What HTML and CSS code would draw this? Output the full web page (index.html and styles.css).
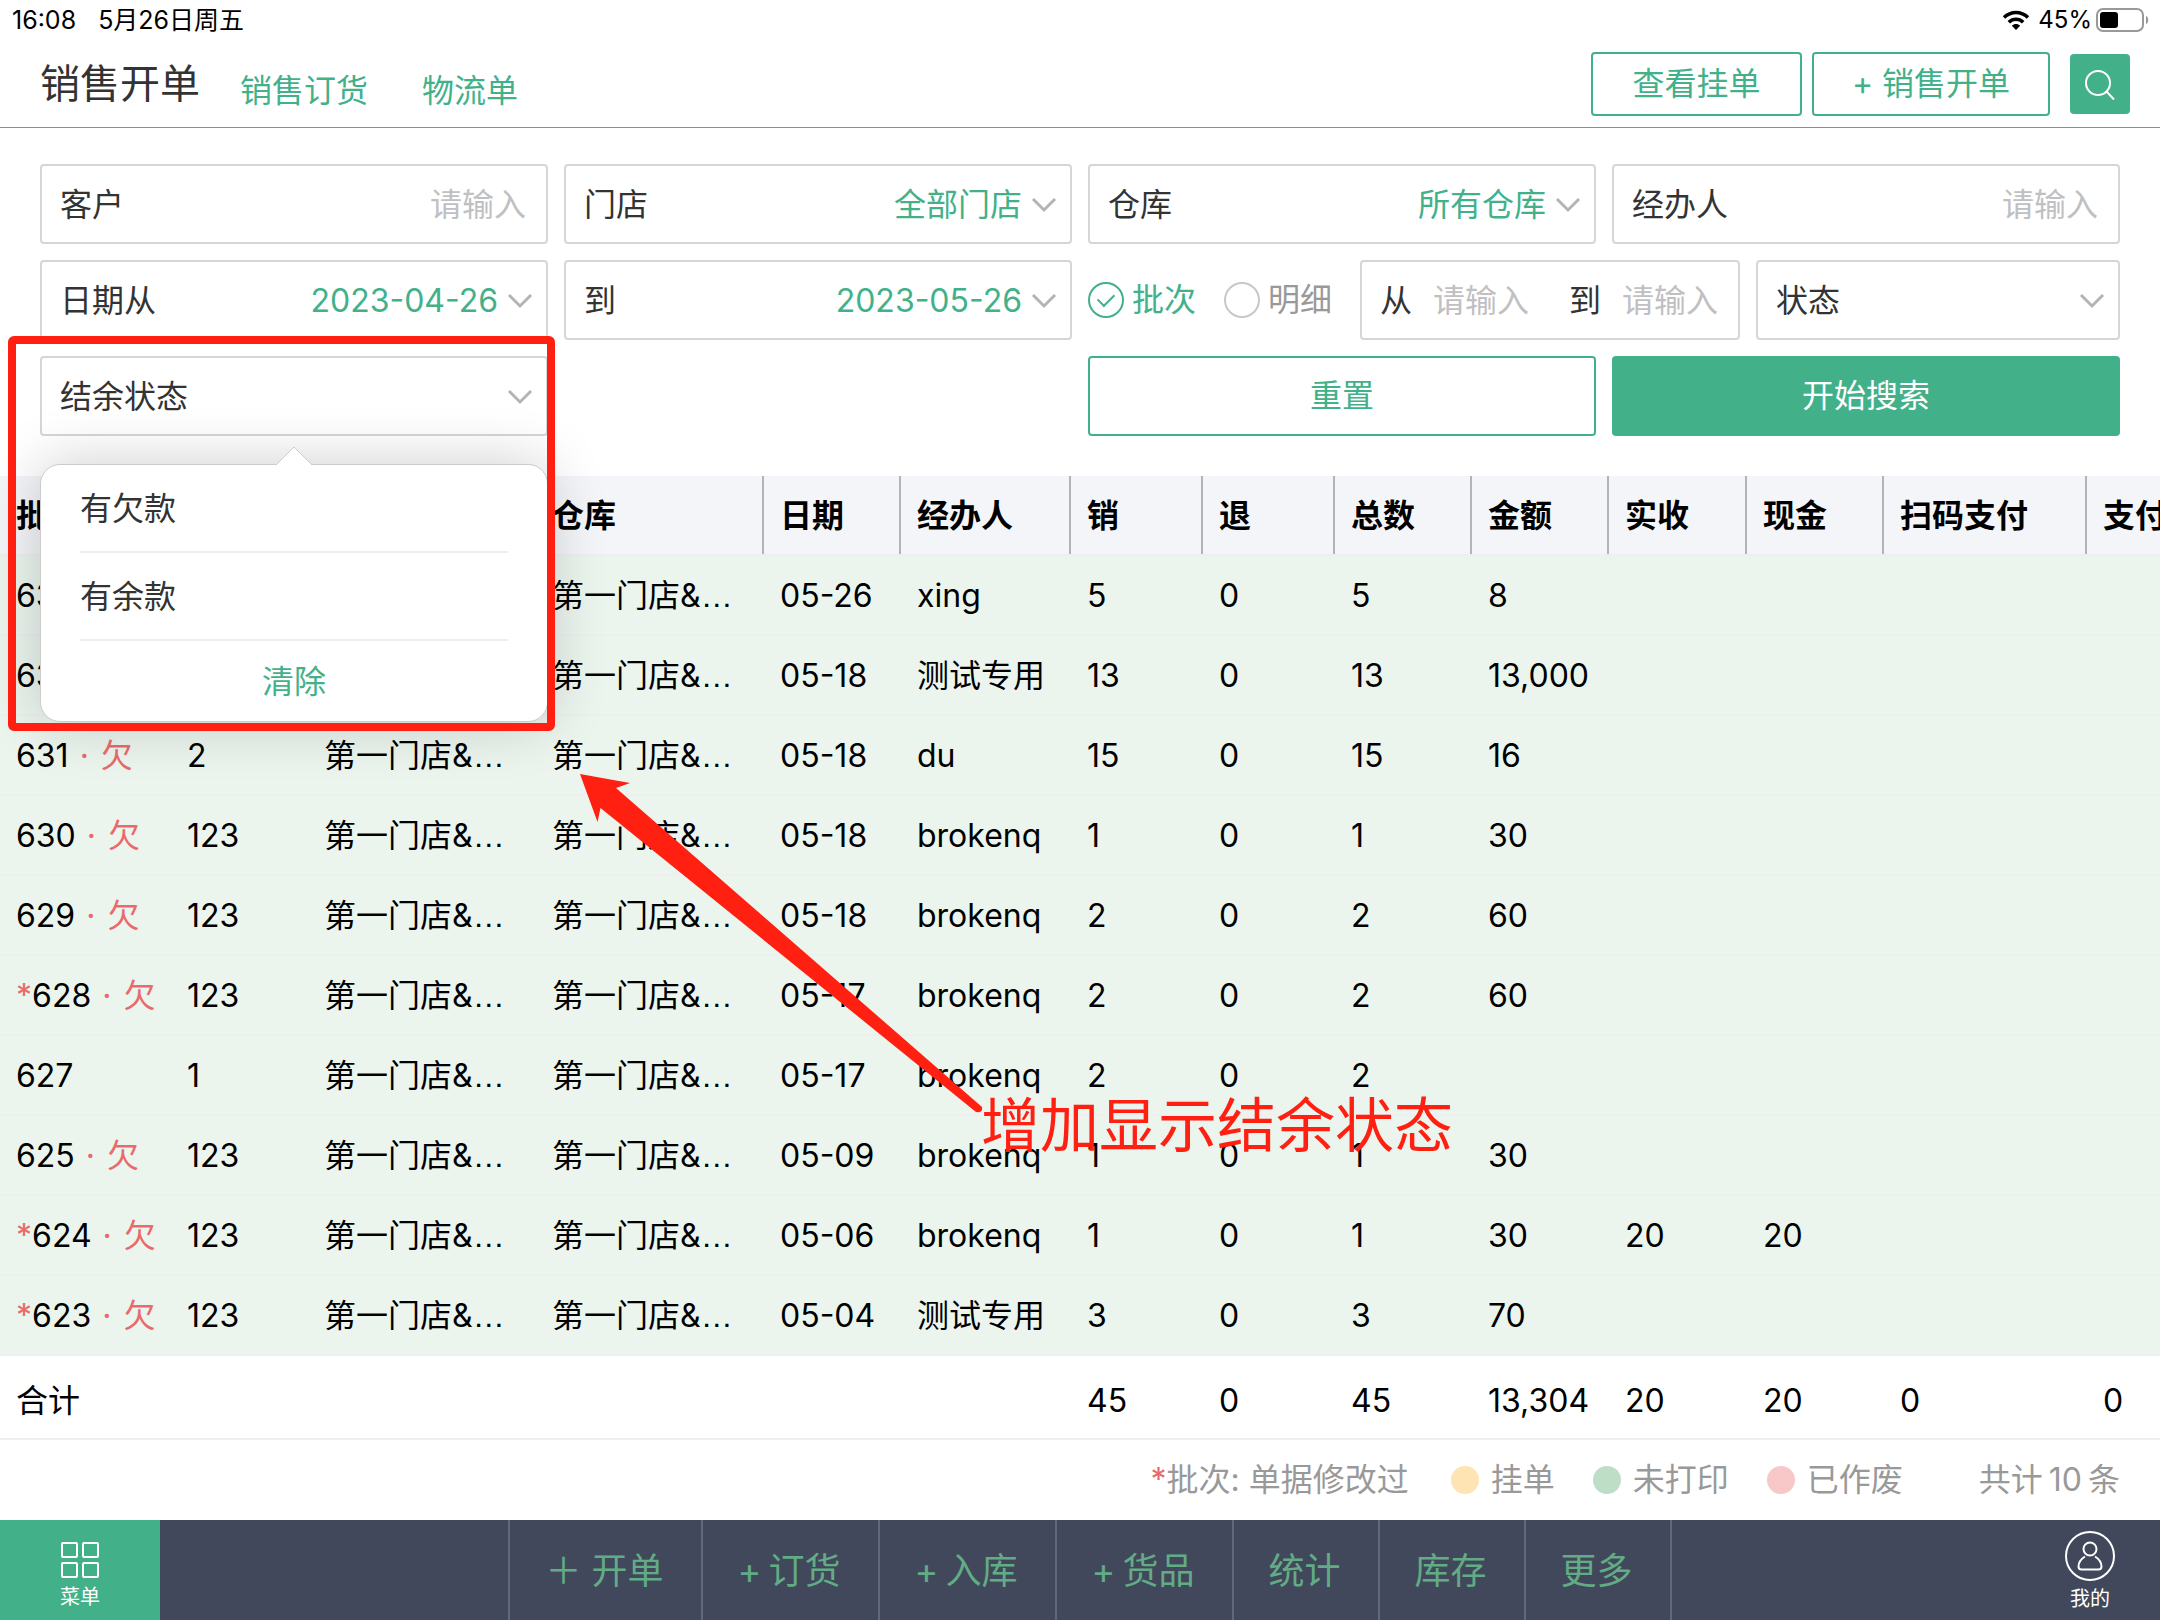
FILE: index.html
```html
<!DOCTYPE html>
<html lang="zh-CN">
<head>
<meta charset="utf-8">
<meta name="viewport" content="width=device-width, initial-scale=1">
<title>销售开单</title>
<link rel="stylesheet" href="styles.css">
</head>
<body>
<div class="page">
  <div class="status-bar">
    <span class="status-time">16:08</span>
    <span class="status-date">5月26日周五</span>
    <svg class="wifi" viewBox="0 0 28 20" aria-hidden="true">
      <path d="M2 7.5C9 .8 19 .8 26 7.5M6.8 12.2c4.200-3.900 10.200-3.900 14.400 0" fill="none" stroke="#000" stroke-width="3.600"/>
      <path d="M14 20l-4.200-4.300c2.400-2.200 6-2.200 8.400 0z" fill="#000"/>
    </svg>
    <span>45%</span>
    <svg class="battery" viewBox="0 0 54 24" aria-hidden="true">
      <rect x="1" y="1" width="46" height="22" rx="6" fill="none" stroke="#999" stroke-width="2"/>
      <rect x="4" y="4" width="18" height="16" rx="3" fill="#000"/>
      <path d="M50 8c3 1 3 7 0 8z" fill="#999"/>
    </svg>
  </div>

  <header class="topbar">
    <h1 class="title">销售开单</h1>
    <nav class="tabs">
      <a href="#order">销售订货</a>
      <a href="#logistics">物流单</a>
    </nav>
    <div class="actions">
      <button class="btn btn-held" type="button">查看挂单</button>
      <button class="btn btn-new" type="button">+ 销售开单</button>
      <button class="btn-search" type="button" aria-label="搜索">
        <svg viewBox="0 0 32 32" fill="none" stroke="#fff" stroke-width="2"><circle cx="14" cy="15" r="12"/><path d="M22.500 23.500L30 31.500"/></svg>
      </button>
    </div>
  </header>

  <form class="filters">
    <div class="field"><label for="customer">客户</label><input id="customer" type="text" placeholder="请输入"></div>
    <div class="field"><label for="shop">门店</label><select id="shop"><option>全部门店</option></select><svg class="chevron" viewBox="0 0 26 16"><path d="M2 2l11 11L24 2"/></svg></div>
    <div class="field"><label for="depot">仓库</label><select id="depot"><option>所有仓库</option></select><svg class="chevron" viewBox="0 0 26 16"><path d="M2 2l11 11L24 2"/></svg></div>
    <div class="field"><label for="agent">经办人</label><input id="agent" type="text" placeholder="请输入"></div>

    <div class="field"><label for="from">日期从</label><input id="from" type="text" value="2023-04-26"><svg class="chevron" viewBox="0 0 26 16"><path d="M2 2l11 11L24 2"/></svg></div>
    <div class="field"><label for="to">到</label><input id="to" type="text" value="2023-05-26"><svg class="chevron" viewBox="0 0 26 16"><path d="M2 2l11 11L24 2"/></svg></div>
    <div class="group">
      <div class="radios">
        <label class="radio"><input type="radio" name="mode" checked><span>批次</span></label>
        <label class="radio"><input type="radio" name="mode"><span>明细</span></label>
      </div>
      <div class="field range">
        <label for="min">从</label><input id="min" type="text" placeholder="请输入">
        <label for="max">到</label><input id="max" type="text" placeholder="请输入">
      </div>
      <div class="field state"><label for="state">状态</label><select id="state"><option></option></select><svg class="chevron" viewBox="0 0 26 16"><path d="M2 2l11 11L24 2"/></svg></div>
    </div>

    <div class="field anchor">
      <label for="balance">结余状态</label><select id="balance"><option></option></select><svg class="chevron" viewBox="0 0 26 16"><path d="M2 2l11 11L24 2"/></svg>
      <div class="popover">
        <svg class="popover-tip" viewBox="0 0 36 20"><path d="M0 19L18 1l18 18" fill="#fff" stroke="#ccc"/><path d="M1 19h34v1H1z" fill="#fff"/></svg>
        <button class="option" type="button">有欠款</button>
        <button class="option" type="button">有余款</button>
        <button class="clear" type="button">清除</button>
      </div>
    </div>
    <button class="btn reset" type="reset">重置</button>
    <button class="btn submit" type="submit">开始搜索</button>
  </form>

  <div class="table-wrap">
    <table class="sales">
      <colgroup>
        <col class="w171"><col class="w137"><col class="w228"><col class="w228"><col class="w137"><col class="w170"><col class="w132"><col class="w132"><col class="w137"><col class="w137"><col class="w138"><col class="w137"><col class="w203"><col class="w203">
      </colgroup>
      <thead>
        <tr><th>批次</th><th>客户</th><th>门店</th><th>仓库</th><th>日期</th><th>经办人</th><th>销</th><th>退</th><th>总数</th><th>金额</th><th>实收</th><th>现金</th><th>扫码支付</th><th>支付</th></tr>
      </thead>
      <tbody>
        <tr><td>633<i class="owe"><span>·</span><span>欠</span></i></td><td>123</td><td>第一门店&amp;<span class="more">…</span></td><td>第一门店&amp;<span class="more">…</span></td><td>05-26</td><td>xing</td><td>5</td><td>0</td><td>5</td><td>8</td><td></td><td></td><td></td><td></td></tr>
        <tr><td>632<i class="owe"><span>·</span><span>欠</span></i></td><td>123</td><td>第一门店&amp;<span class="more">…</span></td><td>第一门店&amp;<span class="more">…</span></td><td>05-18</td><td>测试专用</td><td>13</td><td>0</td><td>13</td><td>13,000</td><td></td><td></td><td></td><td></td></tr>
        <tr><td>631<i class="owe"><span>·</span><span>欠</span></i></td><td>2</td><td>第一门店&amp;<span class="more">…</span></td><td>第一门店&amp;<span class="more">…</span></td><td>05-18</td><td>du</td><td>15</td><td>0</td><td>15</td><td>16</td><td></td><td></td><td></td><td></td></tr>
        <tr><td>630<i class="owe"><span>·</span><span>欠</span></i></td><td>123</td><td>第一门店&amp;<span class="more">…</span></td><td>第一门店&amp;<span class="more">…</span></td><td>05-18</td><td>brokenq</td><td>1</td><td>0</td><td>1</td><td>30</td><td></td><td></td><td></td><td></td></tr>
        <tr><td>629<i class="owe"><span>·</span><span>欠</span></i></td><td>123</td><td>第一门店&amp;<span class="more">…</span></td><td>第一门店&amp;<span class="more">…</span></td><td>05-18</td><td>brokenq</td><td>2</td><td>0</td><td>2</td><td>60</td><td></td><td></td><td></td><td></td></tr>
        <tr><td><i>*</i>628<i class="owe"><span>·</span><span>欠</span></i></td><td>123</td><td>第一门店&amp;<span class="more">…</span></td><td>第一门店&amp;<span class="more">…</span></td><td>05-17</td><td>brokenq</td><td>2</td><td>0</td><td>2</td><td>60</td><td></td><td></td><td></td><td></td></tr>
        <tr><td>627</td><td>1</td><td>第一门店&amp;<span class="more">…</span></td><td>第一门店&amp;<span class="more">…</span></td><td>05-17</td><td>brokenq</td><td>2</td><td>0</td><td>2</td><td></td><td></td><td></td><td></td><td></td></tr>
        <tr><td>625<i class="owe"><span>·</span><span>欠</span></i></td><td>123</td><td>第一门店&amp;<span class="more">…</span></td><td>第一门店&amp;<span class="more">…</span></td><td>05-09</td><td>brokenq</td><td>1</td><td>0</td><td>1</td><td>30</td><td></td><td></td><td></td><td></td></tr>
        <tr><td><i>*</i>624<i class="owe"><span>·</span><span>欠</span></i></td><td>123</td><td>第一门店&amp;<span class="more">…</span></td><td>第一门店&amp;<span class="more">…</span></td><td>05-06</td><td>brokenq</td><td>1</td><td>0</td><td>1</td><td>30</td><td>20</td><td>20</td><td></td><td></td></tr>
        <tr><td><i>*</i>623<i class="owe"><span>·</span><span>欠</span></i></td><td>123</td><td>第一门店&amp;<span class="more">…</span></td><td>第一门店&amp;<span class="more">…</span></td><td>05-04</td><td>测试专用</td><td>3</td><td>0</td><td>3</td><td>70</td><td></td><td></td><td></td><td></td></tr>
      </tbody>
      <tfoot>
        <tr><td>合计</td><td></td><td></td><td></td><td></td><td></td><td>45</td><td>0</td><td>45</td><td>13,304</td><td>20</td><td>20</td><td>0</td><td>0</td></tr>
      </tfoot>
    </table>
  </div>

  <div class="legend">
    <span class="edited"><i>*</i>批次: 单据修改过</span>
    <span class="key held">挂单</span>
    <span class="key unprinted">未打印</span>
    <span class="key voided">已作废</span>
    <span class="count"><span>共计</span><span>10</span><span>条</span></span>
  </div>

  <footer class="bottom">
    <button class="menu" type="button">
      <svg viewBox="0 0 40 38" fill="none" stroke="#fff" stroke-width="2"><rect x="2" y="2" width="15" height="14" rx="1"/><rect x="23" y="2" width="15" height="14" rx="1"/><rect x="2" y="22" width="15" height="14" rx="1"/><rect x="23" y="22" width="15" height="14" rx="1"/></svg>
      <span>菜单</span>
    </button>
    <nav class="shortcuts">
      <a href="#sale">＋ 开单</a>
      <a href="#purchase"><span class="plus">+</span>订货</a>
      <a href="#stockin"><span class="plus">+</span>入库</a>
      <a href="#goods"><span class="plus">+</span>货品</a>
      <a href="#stats">统计</a>
      <a href="#stock">库存</a>
      <a href="#more">更多</a>
    </nav>
    <button class="mine" type="button">
      <svg viewBox="0 0 50 50" fill="none" stroke="#fff" stroke-width="2"><circle cx="25" cy="25" r="24"/><circle cx="25" cy="18" r="6.500"/><path d="M20 25.500c-4 2.500-6.500 6-6.500 10q0 3 3 3h17q3 0 3-3c0-4-2.500-7.500-6.500-10"/></svg>
      <span>我的</span>
    </button>
  </footer>

  <div class="mark-box"></div>
  <svg class="mark-arrow" viewBox="0 0 404 340"><path d="M0 0L50 9L36 14L402 333Q403 339 396 338L20.500 34L17.500 48Z" fill="#ff2012"/></svg>
  <div class="mark-text">增加显示结余状态</div>
</div>
</body>
</html>
```

FILE: styles.css
```css
:root {
  --green: #42b189;
  --ink: #333;
  --line: #d6d6d8;
  --danger: #e96a6a;
  --mark: #ff2012;
}

* { box-sizing: border-box; }

body {
  margin: 0;
  background: #fff;
  color: #000;
  font: 32px/40px Inter, "Noto Sans CJK SC", sans-serif;
}

i { font-style: normal; color: var(--danger); }
a { text-decoration: none; }
svg { display: block; flex: none; }

button, input, select {
  margin: 0;
  padding: 0;
  border: 0;
  background: none;
  color: inherit;
  font: inherit;
}

.page {
  position: relative;
  display: flex;
  flex-direction: column;
  min-height: 100vh;
  overflow: hidden;
}

/* Device status line */
.status-bar {
  display: flex;
  align-items: center;
  height: 40px;
  padding: 0 10px 0 12px;
  font-size: 24px;
}
.status-time { font-size: 25px; }
.status-date { margin-left: 22px; font-size: 25px; }
.wifi { width: 28px; height: 20px; margin: 0 8px 0 auto; }
.battery { width: 54px; height: 24px; margin-left: 4px; }

/* Page header */
.topbar {
  display: flex;
  align-items: center;
  height: 88px;
  padding: 0 30px 0 40px;
  border-bottom: 1px solid #8e8e90;
}
.title { margin: 0; font-size: 40px; font-weight: 400; color: var(--ink); }
.tabs { display: flex; gap: 54px; margin-left: 40px; padding-top: 14px; }
.tabs a { color: var(--green); }
.actions { display: flex; align-items: center; gap: 10px; margin-left: auto; }

.btn {
  border: 2px solid var(--green);
  border-radius: 4px;
  color: var(--green);
}
.btn-held { width: 211px; height: 64px; }
.btn-new { width: 238px; height: 64px; }
.btn-search {
  display: grid;
  place-items: center;
  width: 60px;
  height: 60px;
  margin-left: 10px;
  border-radius: 4px;
  background: var(--green);
}
.btn-search svg { width: 32px; height: 32px; }

/* Filters */
.filters {
  display: grid;
  grid-template-columns: repeat(4, minmax(0, 1fr));
  gap: 16px;
  padding: 36px 40px 40px;
}
.field {
  display: flex;
  align-items: center;
  height: 80px;
  padding: 2px 13px 0 18px;
  border: 2px solid var(--line);
  border-radius: 4px;
  color: var(--ink);
}
.field label { flex: none; }
.field input, .field select {
  flex: 1;
  min-width: 0;
  height: 40px;
  color: var(--green);
  text-align: right;
  text-align-last: right;
  appearance: none;
  outline: 0;
}
.field input:last-child { padding-right: 7px; }
.field input::placeholder { color: #c0c0c2; opacity: 1; }
.chevron {
  width: 26px;
  height: 16px;
  margin-left: 9px;
  fill: none;
  stroke: #b4b4b8;
  stroke-width: 3;
}

.group { display: flex; grid-column: span 2; }
.radios { display: flex; flex: 1; gap: 28px; }
.radio { display: flex; align-items: center; gap: 8px; color: #999; }
.radio:has(:checked) { color: var(--green); }
.radio input {
  display: grid;
  place-items: center;
  width: 36px;
  height: 36px;
  border: 2px solid #c8c8ca;
  border-radius: 50%;
  appearance: none;
}
.radio input:checked { border-color: var(--green); }
.radio input:checked::after {
  content: "";
  width: 8px;
  height: 14px;
  margin-bottom: 4px;
  border: solid var(--green);
  border-width: 0 2px 2px 0;
  transform: rotate(45deg);
}
.range { width: 380px; }
.range input + label { margin-left: 40px; }
.state { width: 364px; margin-left: 16px; }

.reset { grid-column: 3; height: 80px; }
.submit { height: 80px; background: var(--green); color: #fff; }

/* Balance state menu */
.anchor { position: relative; }
.popover {
  position: absolute;
  z-index: 2;
  top: 106px;
  left: -2px;
  right: -2px;
  padding: 0 39px;
  border: 1px solid #ccc;
  border-radius: 20px;
  background: #fff;
  box-shadow: 0 0 60px rgba(0, 0, 0, .2);
}
.popover-tip {
  position: absolute;
  top: -19px;
  left: calc(50% - 18px);
  width: 36px;
  height: 20px;
}
.popover button { display: block; width: 100%; padding-top: 2px; }
.option { height: 88px; border-bottom: 2px solid #efeff1; text-align: left; }
.clear { height: 80px; color: var(--green); }

/* Sales table */
.table-wrap { overflow: hidden; }
.sales {
  width: 2290px;
  border-collapse: separate;
  border-spacing: 0;
  table-layout: fixed;
}
.sales th, .sales td {
  height: 80px;
  padding: 2px 16px 0;
  border-bottom: 2px solid #efeff1;
  text-align: left;
  white-space: nowrap;
}
.sales th {
  position: relative;
  background: #f4f5f8;
  font-weight: 600;
}
.sales th + th::before {
  content: "";
  position: absolute;
  top: 0;
  bottom: 0;
  left: -2px;
  width: 2px;
  background: #b4b4b6;
}
.sales td { padding-right: 0; }
.sales tbody td { background: #ebf5ee; }
.sales tfoot td { height: 84px; padding-top: 8px; }
.owe { display: inline-flex; gap: 12px; margin-left: 11px; }
.more { font-family: "Liberation Sans", sans-serif; line-height: 32px; }
.w132 { width: 132px; }
.w137 { width: 137px; }
.w138 { width: 138px; }
.w170 { width: 170px; }
.w171 { width: 171px; }
.w203 { width: 203px; }
.w228 { width: 228px; }

/* Row colour key */
.legend {
  display: flex;
  align-items: center;
  justify-content: flex-end;
  gap: 38px;
  height: 80px;
  padding: 0 40px;
  color: #999;
}
.edited { margin-right: 4px; }
.key { display: flex; align-items: center; gap: 12px; }
.key::before { content: ""; width: 28px; height: 28px; border-radius: 50%; }
.held::before { background: #ffe4b3; }
.unprinted::before { background: #bfdec6; }
.voided::before { background: #f8c8c8; }
.count { display: flex; gap: 6px; margin-left: 38px; }

/* Bottom bar */
.bottom {
  display: flex;
  height: 100px;
  margin-top: auto;
  background: #41485b;
  color: #fff;
}
.menu, .mine {
  display: flex;
  flex-direction: column;
  align-items: center;
  font-size: 20px;
  line-height: 24px;
}
.menu { width: 160px; padding-top: 21px; gap: 6px; background: var(--green); }
.menu svg { width: 40px; height: 38px; }
.mine { width: 140px; padding-top: 11px; gap: 6px; }
.mine svg { width: 50px; height: 50px; }
.shortcuts { display: flex; flex: 1; justify-content: center; }
.shortcuts a {
  display: flex;
  align-items: center;
  padding: 2px 37px 0 35px;
  border-right: 2px solid #5d6a7e;
  color: #62ac85;
  font-size: 36px;
  white-space: pre;
}
.shortcuts a:first-child { border-left: 2px solid #5d6a7e; }
.plus { width: 31px; }

/* Reviewer's marks, drawn over the screen */
.mark-box {
  position: absolute;
  z-index: 3;
  top: 336px;
  left: 8px;
  width: 547px;
  height: 395px;
  border: 8px solid var(--mark);
  border-radius: 6px;
}
.mark-arrow { position: absolute; z-index: 3; top: 774px; left: 580px; width: 404px; height: 340px; }
.mark-text {
  position: absolute;
  z-index: 3;
  top: 1086px;
  left: 981px;
  color: var(--mark);
  font-size: 59px;
  line-height: 80px;
  white-space: nowrap;
}
```
